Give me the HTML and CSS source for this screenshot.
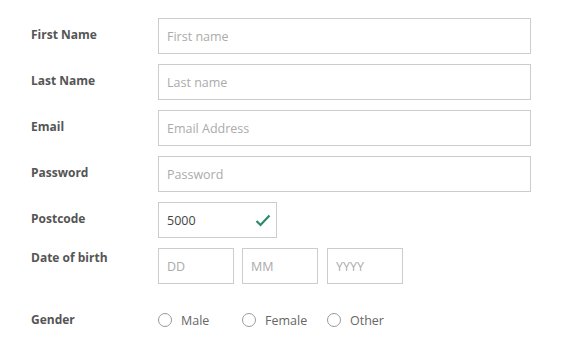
FILE: index.html
```html
<!DOCTYPE html>
<html>
<head>
<meta charset="utf-8">
<link rel="stylesheet" href="styles.css">
</head>
<body>
<form class="form">
  <div class="row">
    <label class="label">First Name</label>
    <input class="field field--wide" type="text" placeholder="First name">
  </div>
  <div class="row">
    <label class="label">Last Name</label>
    <input class="field field--wide" type="text" placeholder="Last name">
  </div>
  <div class="row">
    <label class="label">Email</label>
    <input class="field field--wide" type="text" placeholder="Email Address">
  </div>
  <div class="row">
    <label class="label">Password</label>
    <input class="field field--wide" type="text" placeholder="Password">
  </div>
  <div class="row">
    <label class="label">Postcode</label>
    <div class="valid">
      <input class="field field--post" type="text" value="5000">
      <svg class="check" width="16" height="13" viewBox="0 0 16 13"><path d="M1.5 7 L5.5 11 L14.5 1.5" fill="none" stroke="#2b8a69" stroke-width="2.2"/></svg>
    </div>
  </div>
  <div class="row">
    <label class="label label--dob">Date of birth</label>
    <div class="trio">
      <input class="field" type="text" placeholder="DD">
      <input class="field" type="text" placeholder="MM">
      <input class="field" type="text" placeholder="YYYY">
    </div>
  </div>
  <div class="row row--gender">
    <label class="label label--gender">Gender</label>
    <div class="trio">
      <label class="radio"><span class="dot"></span>Male</label>
      <label class="radio"><span class="dot"></span>Female</label>
      <label class="radio"><span class="dot"></span>Other</label>
    </div>
  </div>
</form>
</body>
</html>
```

FILE: styles.css
```css
* { box-sizing: border-box; }
body {
  margin: 0;
  background: #fff;
  font-family: "Open Sans", sans-serif;
}
.form {
  display: flex;
  flex-direction: column;
  gap: 10px;
  padding: 18px 0 0 31px;
}
.row {
  display: flex;
  align-items: flex-start;
}
.label {
  width: 127px;
  flex: none;
  padding-top: 9px;
  font-size: 12px;
  font-weight: 700;
  line-height: 16px;
  color: #555;
}
.label--dob { padding-top: 2px; }
.field {
  height: 36px;
  border: 1px solid #cccccc;
  padding: 0 8px;
  font-family: "Open Sans", sans-serif;
  font-size: 12.5px;
  color: #444;
  outline: none;
  background: #fff;
  width: 76px;
}
.field::placeholder { color: #ababab; }
.field--wide { width: 373px; }
.field--post { width: 119px; }
.valid {
  position: relative;
  display: flex;
}
.check {
  position: absolute;
  left: 97px;
  top: 12px;
}
.trio {
  display: grid;
  grid-template-columns: 76px 77px 76px;
  column-gap: 8px;
}
.row--gender {
  margin-top: 12px;
  align-items: center;
  height: 28px;
}
.label--gender { padding-top: 0; }
.radio {
  display: flex;
  align-items: center;
  gap: 9px;
  font-size: 12.5px;
  color: #666;
}
.dot {
  width: 14px;
  height: 14px;
  border: 1px solid #9a9a9a;
  border-radius: 50%;
  flex: none;
}
```
